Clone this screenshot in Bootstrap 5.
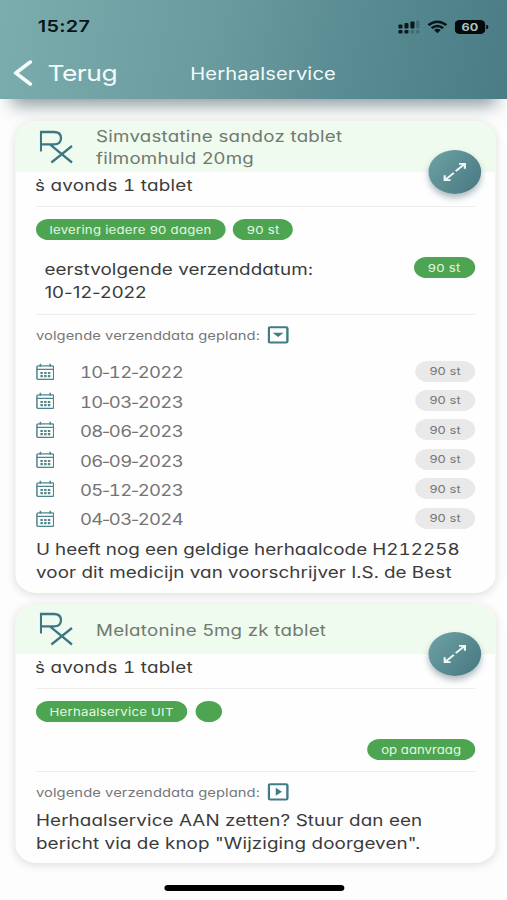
<!DOCTYPE html>
<html lang="nl">
<head>
<meta charset="utf-8">
<meta name="viewport" content="width=device-width, initial-scale=1">
<title>Herhaalservice</title>
<link rel="stylesheet" href="https://cdn.jsdelivr.net/npm/bootstrap@5.3.0/dist/css/bootstrap.min.css">
<style>
html,body{height:900px;overflow:hidden;background:#fdfdfd}
body{font-family:Inter,"Liberation Sans",sans-serif;color:#3b3b3b}
.screen{width:422.5px;height:900px;transform:scaleX(1.2);transform-origin:0 0}
.topbar{height:98.5px;background:linear-gradient(100deg,#7badae 0%,#6a9b9f 42%,#5b8d94 65%,#4a7c86 100%);box-shadow:0 16px 15px -10px rgba(60,85,90,.6);margin-bottom:22.5px}
.statusbar{height:52px;padding:1px 16px 0 31.5px}
.clock{font-size:16.5px;font-weight:600;color:#071518;letter-spacing:.25px}
.wifi{margin:0 6px}
.navline{height:42px;color:#f4fbfb}
.back{font-size:22px;letter-spacing:-.4px;padding-left:10.5px;gap:13px;width:158.5px}
.heading{font-size:16.8px;letter-spacing:.12px;padding-top:3px}
.med{margin:0 10px 11px 13.3px;border-radius:18px;background:#fefefe;box-shadow:0 2px 9px rgba(0,0,0,.13);font-feature-settings:"cv11";position:relative}
.med-a{height:471.5px}
.med-b{height:259.5px}
.med-head{height:50.5px;background:#effbee;border-radius:18px 18px 0 0;color:#717971;padding-left:19.8px;gap:19.2px;font-size:15.6px;line-height:22.5px;letter-spacing:.19px}
.med-head span{padding-top:4px}
.med-head svg{margin-top:1px}
.med-main{padding:0 17px 0 16.7px}
.copy{font-size:15.7px;line-height:22.7px;letter-spacing:.05px;white-space:nowrap}
.tab-num{font-feature-settings:"cv11","tnum"}
.dose{height:35px;padding-top:3px;letter-spacing:.2px;border-bottom:1.5px solid #ededee}
.tick{margin-left:.8px;margin-right:-6.8px}
.round{position:absolute;right:11.5px;top:28.5px;width:44px;height:44px;border-radius:50%;background:linear-gradient(125deg,#6ea3a6,#47767f);box-shadow:0 4px 6px rgba(50,80,95,.38)}
.pill{display:inline-flex;align-items:center;height:21px;border-radius:11px;padding:2px 11.3px 0;background:#4da551;color:#e4f7e2;font-size:11px;letter-spacing:.2px;white-space:nowrap}
.pill-void{width:22.5px;padding:0}
.pill-off{background:#e9e9e9;color:#777;padding:2px 11.4px 0;font-size:10.8px;letter-spacing:.1px;margin-top:-1px}
.tags{padding-top:12px;gap:6.7px}
.next{height:75px;padding:19.5px 0 0 7px;border-bottom:1.5px solid #ededee}
.ship{margin-top:-2.5px;padding-left:11.8px;padding-right:11.8px}
.ask{height:49.5px;padding-bottom:10.5px;border-bottom:1.5px solid #ededee}
.ask .pill{letter-spacing:0}
.plan{height:42.5px;font-size:12.3px;letter-spacing:.05px;color:#777;gap:6.8px}
.plan span{padding-top:1px}
.plan svg{margin-top:-1.5px}
.plan-row{height:29.4px;font-size:15.4px;color:#747474}
.plan-row svg{margin-right:21.2px;width:15.5px}
.day{font-feature-settings:"cv11","tnum";padding-top:2.5px;letter-spacing:-.55px}
.dash{font-feature-settings:normal;margin:0 -.7px}
.code{padding-top:6px;letter-spacing:.02px}
.code .line-b{letter-spacing:.09px}
.note{margin-top:-4px;letter-spacing:.08px}
.tags.no-alt{font-feature-settings:normal}
.homebar{width:150.5px;height:6px;border-radius:3px;background:#000;margin:22px 0 0 136.5px}
</style>
</head>
<body>
<svg width="0" height="0" class="position-absolute" aria-hidden="true">
<defs>
<symbol id="rx" viewBox="0 0 34 34" preserveAspectRatio="none"><path d="M1.300 21.500V2H14.500Q21.800 2 21.800 8.200T14.500 14.300H1.500M10.500 14.300 33 32.500M33 16 12 32.500" fill="none" stroke="#3f7684" stroke-width="2.300"/></symbol>
<symbol id="cal" viewBox="0 0 16 18"><rect x=".8" y="2.700" width="14.400" height="14" rx="1.300" fill="none" stroke="#4c858c" stroke-width="1.300"/><path d="M.8 6.300H15.200M3.800.500V3.500M12.200.500V3.500" stroke="#4c858c" stroke-width="1.300"/><path d="M3.800 10H5.900M7 10H9.100M10.200 10H12.300M3.800 13.200H5.900M7 13.200H9.100M10.200 13.200H12.300" stroke="#4c858c" stroke-width="2.200"/></symbol>
<symbol id="expand" viewBox="0 0 20 20"><path d="M10.800 9.200 18 2.200M13.500 1.800H18.400V6.700M9.200 10.800 2 17.800M1.600 13.300V18.200H6.500" fill="none" stroke="#edf9fb" stroke-width="1.800"/></symbol>
</defs>
</svg>
<div class="screen">
<header class="topbar">
<div class="statusbar d-flex align-items-center justify-content-between">
<span class="clock">15:27</span>
<div class="d-flex align-items-center">
<svg width="19" height="14" viewBox="0 0 19 14"><g fill="#0a181b"><rect x="1" y="4.500" width="3.400" height="4" rx="1"/><rect x="1" y="10" width="3.400" height="3.500" rx="1"/><rect x="6" y="3" width="3.400" height="5.500" rx="1"/><rect x="6" y="10" width="3.400" height="3.500" rx="1"/><rect x="11" y="1.500" width="3.400" height="7" rx="1"/></g><g fill="#3f6d76"><rect x="11" y="10" width="3.400" height="3.500" rx="1"/><rect x="15.700" y="0.500" width="2.800" height="8" rx="1"/><rect x="15.700" y="10" width="2.800" height="3.500" rx="1"/></g></svg>
<svg class="wifi" width="17" height="14" viewBox="0 0 17 14"><path d="M1 5.200Q8.500-1.800 16 5.200M3.700 8.200Q8.500 3.800 13.300 8.200" fill="none" stroke="#071518" stroke-width="2.300"/><path d="M5.700 10Q8.500 7.700 11.300 10L8.500 13.200Z" fill="#071518"/></svg>
<svg width="28" height="14" viewBox="0 0 28 14"><rect width="25.300" height="14" rx="4" fill="#05090a"/><path d="M26.200 4.700Q28.200 5 28.200 7T26.200 9.300Z" fill="#05090a"/><text x="12.600" y="11" text-anchor="middle" font-family="Inter, sans-serif" font-size="10.500" font-weight="700" fill="#a9c3c5">60</text></svg>
</div>
</div>
<div class="navline d-flex align-items-center">
<div class="back d-flex align-items-center"><svg width="16" height="26" viewBox="0 0 16 26"><path d="M14.200 2 2.200 13 14.200 24" fill="none" stroke="#f6fcfc" stroke-width="3.400" stroke-linecap="round" stroke-linejoin="round"/></svg><span>Terug</span></div>
<span class="heading">Herhaalservice</span>
</div>
</header>
<main>
<article class="med med-a">
<div class="med-head d-flex align-items-center"><svg width="27.800" height="34"><use href="#rx"/></svg><span>Simvastatine sandoz tablet<br>filmomhuld 20mg</span></div>
<div class="round d-flex align-items-center justify-content-center"><svg width="20" height="20"><use href="#expand"/></svg></div>
<div class="med-main">
<div class="dose copy tab-num"><span class="tick">`</span>s avonds 1 tablet</div>
<div class="tags d-flex"><span class="pill">levering iedere 90 dagen</span><span class="pill">90 st</span></div>
<div class="next d-flex justify-content-between align-items-start"><div class="copy">eerstvolgende verzenddatum:<br>10-12-2022</div><span class="pill ship">90 st</span></div>
<div class="plan d-flex align-items-center"><span>volgende verzenddata gepland:</span><svg width="17.500" height="18" viewBox="0 0 17.500 18"><rect x="1" y="1.200" width="15.500" height="15.200" rx="1.200" fill="none" stroke="#427b86" stroke-width="2"/><path d="M4.200 6.800H13.300L8.750 11Z" fill="#427b86"/></svg></div>
<div class="plan-row d-flex align-items-center"><svg width="16" height="18"><use href="#cal"/></svg><span class="day">10<span class="dash">-</span>12<span class="dash">-</span>2022</span><span class="pill pill-off ms-auto">90 st</span></div>
<div class="plan-row d-flex align-items-center"><svg width="16" height="18"><use href="#cal"/></svg><span class="day">10<span class="dash">-</span>03<span class="dash">-</span>2023</span><span class="pill pill-off ms-auto">90 st</span></div>
<div class="plan-row d-flex align-items-center"><svg width="16" height="18"><use href="#cal"/></svg><span class="day">08<span class="dash">-</span>06<span class="dash">-</span>2023</span><span class="pill pill-off ms-auto">90 st</span></div>
<div class="plan-row d-flex align-items-center"><svg width="16" height="18"><use href="#cal"/></svg><span class="day">06<span class="dash">-</span>09<span class="dash">-</span>2023</span><span class="pill pill-off ms-auto">90 st</span></div>
<div class="plan-row d-flex align-items-center"><svg width="16" height="18"><use href="#cal"/></svg><span class="day">05<span class="dash">-</span>12<span class="dash">-</span>2023</span><span class="pill pill-off ms-auto">90 st</span></div>
<div class="plan-row d-flex align-items-center"><svg width="16" height="18"><use href="#cal"/></svg><span class="day">04<span class="dash">-</span>03<span class="dash">-</span>2024</span><span class="pill pill-off ms-auto">90 st</span></div>
<div class="copy code tab-num">U heeft nog een geldige herhaalcode H212258<br><span class="line-b">voor dit medicijn van voorschrijver I.S. de Best</span></div>
</div>
</article>
<article class="med med-b">
<div class="med-head d-flex align-items-center"><svg width="27.800" height="34"><use href="#rx"/></svg><span>Melatonine 5mg zk tablet</span></div>
<div class="round d-flex align-items-center justify-content-center"><svg width="20" height="20"><use href="#expand"/></svg></div>
<div class="med-main">
<div class="dose copy tab-num"><span class="tick">`</span>s avonds 1 tablet</div>
<div class="tags d-flex no-alt"><span class="pill">Herhaalservice UIT</span><span class="pill pill-void"></span></div>
<div class="ask d-flex justify-content-end align-items-end"><span class="pill">op aanvraag</span></div>
<div class="plan d-flex align-items-center"><span>volgende verzenddata gepland:</span><svg width="17.500" height="18" viewBox="0 0 17.500 18"><rect x="1" y="1.200" width="15.500" height="15.200" rx="1.200" fill="none" stroke="#427b86" stroke-width="2"/><path d="M6.800 4.800V12.800L12 8.800Z" fill="#427b86"/></svg></div>
<div class="copy note">Herhaalservice AAN zetten? Stuur dan een<br>bericht via de knop "Wijziging doorgeven".</div>
</div>
</article>
</main>
<div class="homebar"></div>
</div>
<script src="https://cdn.jsdelivr.net/npm/bootstrap@5.3.0/dist/js/bootstrap.bundle.min.js"></script>
</body>
</html>
